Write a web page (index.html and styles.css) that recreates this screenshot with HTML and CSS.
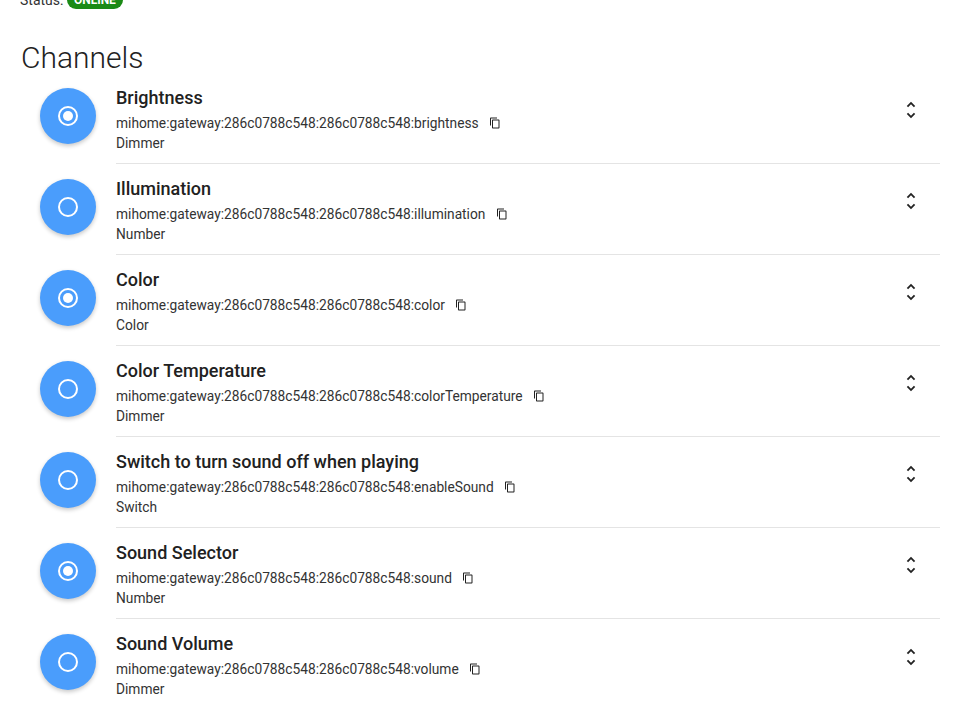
FILE: index.html
```html
<!DOCTYPE html>
<html lang="en">
<head>
    <meta charset="UTF-8">
    <meta name="viewport" content="width=device-width, initial-scale=1.0">
    <title>Thing - Channels</title>
    <link rel="stylesheet" href="styles.css">
</head>
<body>
    <div class="status">Status: <span class="badge">ONLINE</span></div>

    <h2 class="block-title">Channels</h2>

    <ul class="channel-list">
        <li class="channel">
            <div class="media"><svg viewBox="0 0 24 24"><circle cx="12" cy="12" r="9" class="ring"/><circle cx="12" cy="12" r="5" class="dot"/></svg></div>
            <div class="inner">
                <div class="text">
                    <div class="title">Brightness</div>
                    <div class="uid">mihome:gateway:286c0788c548:286c0788c548:brightness <svg class="copy" viewBox="0 0 24 24"><path d="M16 1H4c-1.1 0-2 .9-2 2v14h2V3h12V1zm3 4H8c-1.1 0-2 .9-2 2v14c0 1.1.9 2 2 2h11c1.1 0 2-.9 2-2V7c0-1.1-.9-2-2-2zm0 16H8V7h11v14z"/></svg></div>
                    <div class="type">Dimmer</div>
                </div>
                <svg class="unfold" viewBox="0 0 24 24"><path d="M12 5.83L15.17 9l1.41-1.41L12 3 7.41 7.59 8.83 9 12 5.83zm0 12.34L8.83 15l-1.41 1.41L12 21l4.59-4.59L15.17 15 12 18.17z"/></svg>
            </div>
        </li>
        <li class="channel">
            <div class="media"><svg viewBox="0 0 24 24"><circle cx="12" cy="12" r="9" class="ring"/></svg></div>
            <div class="inner">
                <div class="text">
                    <div class="title">Illumination</div>
                    <div class="uid">mihome:gateway:286c0788c548:286c0788c548:illumination <svg class="copy" viewBox="0 0 24 24"><path d="M16 1H4c-1.1 0-2 .9-2 2v14h2V3h12V1zm3 4H8c-1.1 0-2 .9-2 2v14c0 1.1.9 2 2 2h11c1.1 0 2-.9 2-2V7c0-1.1-.9-2-2-2zm0 16H8V7h11v14z"/></svg></div>
                    <div class="type">Number</div>
                </div>
                <svg class="unfold" viewBox="0 0 24 24"><path d="M12 5.83L15.17 9l1.41-1.41L12 3 7.41 7.59 8.83 9 12 5.83zm0 12.34L8.83 15l-1.41 1.41L12 21l4.59-4.59L15.17 15 12 18.17z"/></svg>
            </div>
        </li>
        <li class="channel">
            <div class="media"><svg viewBox="0 0 24 24"><circle cx="12" cy="12" r="9" class="ring"/><circle cx="12" cy="12" r="5" class="dot"/></svg></div>
            <div class="inner">
                <div class="text">
                    <div class="title">Color</div>
                    <div class="uid">mihome:gateway:286c0788c548:286c0788c548:color <svg class="copy" viewBox="0 0 24 24"><path d="M16 1H4c-1.1 0-2 .9-2 2v14h2V3h12V1zm3 4H8c-1.1 0-2 .9-2 2v14c0 1.1.9 2 2 2h11c1.1 0 2-.9 2-2V7c0-1.1-.9-2-2-2zm0 16H8V7h11v14z"/></svg></div>
                    <div class="type">Color</div>
                </div>
                <svg class="unfold" viewBox="0 0 24 24"><path d="M12 5.83L15.17 9l1.41-1.41L12 3 7.41 7.59 8.83 9 12 5.83zm0 12.34L8.83 15l-1.41 1.41L12 21l4.59-4.59L15.17 15 12 18.17z"/></svg>
            </div>
        </li>
        <li class="channel">
            <div class="media"><svg viewBox="0 0 24 24"><circle cx="12" cy="12" r="9" class="ring"/></svg></div>
            <div class="inner">
                <div class="text">
                    <div class="title">Color Temperature</div>
                    <div class="uid">mihome:gateway:286c0788c548:286c0788c548:colorTemperature <svg class="copy" viewBox="0 0 24 24"><path d="M16 1H4c-1.1 0-2 .9-2 2v14h2V3h12V1zm3 4H8c-1.1 0-2 .9-2 2v14c0 1.1.9 2 2 2h11c1.1 0 2-.9 2-2V7c0-1.1-.9-2-2-2zm0 16H8V7h11v14z"/></svg></div>
                    <div class="type">Dimmer</div>
                </div>
                <svg class="unfold" viewBox="0 0 24 24"><path d="M12 5.83L15.17 9l1.41-1.41L12 3 7.41 7.59 8.83 9 12 5.83zm0 12.34L8.83 15l-1.41 1.41L12 21l4.59-4.59L15.17 15 12 18.17z"/></svg>
            </div>
        </li>
        <li class="channel">
            <div class="media"><svg viewBox="0 0 24 24"><circle cx="12" cy="12" r="9" class="ring"/></svg></div>
            <div class="inner">
                <div class="text">
                    <div class="title">Switch to turn sound off when playing</div>
                    <div class="uid">mihome:gateway:286c0788c548:286c0788c548:enableSound <svg class="copy" viewBox="0 0 24 24"><path d="M16 1H4c-1.1 0-2 .9-2 2v14h2V3h12V1zm3 4H8c-1.1 0-2 .9-2 2v14c0 1.1.9 2 2 2h11c1.1 0 2-.9 2-2V7c0-1.1-.9-2-2-2zm0 16H8V7h11v14z"/></svg></div>
                    <div class="type">Switch</div>
                </div>
                <svg class="unfold" viewBox="0 0 24 24"><path d="M12 5.83L15.17 9l1.41-1.41L12 3 7.41 7.59 8.83 9 12 5.83zm0 12.34L8.83 15l-1.41 1.41L12 21l4.59-4.59L15.17 15 12 18.17z"/></svg>
            </div>
        </li>
        <li class="channel">
            <div class="media"><svg viewBox="0 0 24 24"><circle cx="12" cy="12" r="9" class="ring"/><circle cx="12" cy="12" r="5" class="dot"/></svg></div>
            <div class="inner">
                <div class="text">
                    <div class="title">Sound Selector</div>
                    <div class="uid">mihome:gateway:286c0788c548:286c0788c548:sound <svg class="copy" viewBox="0 0 24 24"><path d="M16 1H4c-1.1 0-2 .9-2 2v14h2V3h12V1zm3 4H8c-1.1 0-2 .9-2 2v14c0 1.1.9 2 2 2h11c1.1 0 2-.9 2-2V7c0-1.1-.9-2-2-2zm0 16H8V7h11v14z"/></svg></div>
                    <div class="type">Number</div>
                </div>
                <svg class="unfold" viewBox="0 0 24 24"><path d="M12 5.83L15.17 9l1.41-1.41L12 3 7.41 7.59 8.83 9 12 5.83zm0 12.34L8.83 15l-1.41 1.41L12 21l4.59-4.59L15.17 15 12 18.17z"/></svg>
            </div>
        </li>
        <li class="channel">
            <div class="media"><svg viewBox="0 0 24 24"><circle cx="12" cy="12" r="9" class="ring"/></svg></div>
            <div class="inner">
                <div class="text">
                    <div class="title">Sound Volume</div>
                    <div class="uid">mihome:gateway:286c0788c548:286c0788c548:volume <svg class="copy" viewBox="0 0 24 24"><path d="M16 1H4c-1.1 0-2 .9-2 2v14h2V3h12V1zm3 4H8c-1.1 0-2 .9-2 2v14c0 1.1.9 2 2 2h11c1.1 0 2-.9 2-2V7c0-1.1-.9-2-2-2zm0 16H8V7h11v14z"/></svg></div>
                    <div class="type">Dimmer</div>
                </div>
                <svg class="unfold" viewBox="0 0 24 24"><path d="M12 5.83L15.17 9l1.41-1.41L12 3 7.41 7.59 8.83 9 12 5.83zm0 12.34L8.83 15l-1.41 1.41L12 21l4.59-4.59L15.17 15 12 18.17z"/></svg>
            </div>
        </li>
    </ul>
</body>
</html>
```

FILE: styles.css
```css
body {
    font-family: Roboto, "Liberation Sans", sans-serif;
    background-color: #fff;
    color: #212121;
    margin: 0;
    padding: 0 36px 0 20px;
    overflow: hidden;
}

.status {
    margin-top: -10px;
    font-size: 14px;
    line-height: 20px;
    color: #333;
}

.badge {
    display: inline-block;
    background-color: #1b8a16;
    color: #fff;
    font-size: 12px;
    font-weight: 700;
    line-height: 18px;
    padding: 0 7px;
    border-radius: 9px;
    vertical-align: 1px;
}

.block-title {
    margin: 31px 0 -2px 1px;
    font-size: 30px;
    font-weight: 300;
    line-height: 34px;
    color: #222;
}

.channel-list {
    list-style: none;
    margin: 0;
    padding: 0 0 0 20px;
}

.channel {
    display: flex;
    align-items: center;
    height: 91px;
}

.media {
    flex: none;
    width: 56px;
    height: 56px;
    border-radius: 50%;
    background-color: #4a9dfc;
    box-shadow: 0 2px 4px rgba(0, 0, 0, 0.22);
    display: flex;
    align-items: center;
    justify-content: center;
    margin-right: 20px;
    margin-bottom: 6px;
}

.media svg {
    width: 24px;
    height: 24px;
}

.ring {
    fill: none;
    stroke: #fff;
    stroke-width: 2;
}

.dot {
    fill: #fff;
}

.inner {
    flex: 1;
    align-self: stretch;
    display: flex;
    align-items: center;
    border-bottom: 1px solid #e4e4e4;
}

.channel:last-child .inner {
    border-bottom: none;
}

.text {
    flex: 1;
    padding-top: 3px;
}

.title {
    font-size: 18px;
    font-weight: 500;
    line-height: 22px;
    color: #212121;
    margin-bottom: 4px;
}

.uid, .type {
    font-size: 13.75px;
    line-height: 20px;
    color: #333;
}

.copy {
    width: 12px;
    height: 12px;
    margin-left: 7px;
    vertical-align: -1px;
    fill: #222;
}

.unfold {
    width: 22px;
    height: 22px;
    margin-right: 18px;
    margin-bottom: 16px;
    fill: #222;
}
```
